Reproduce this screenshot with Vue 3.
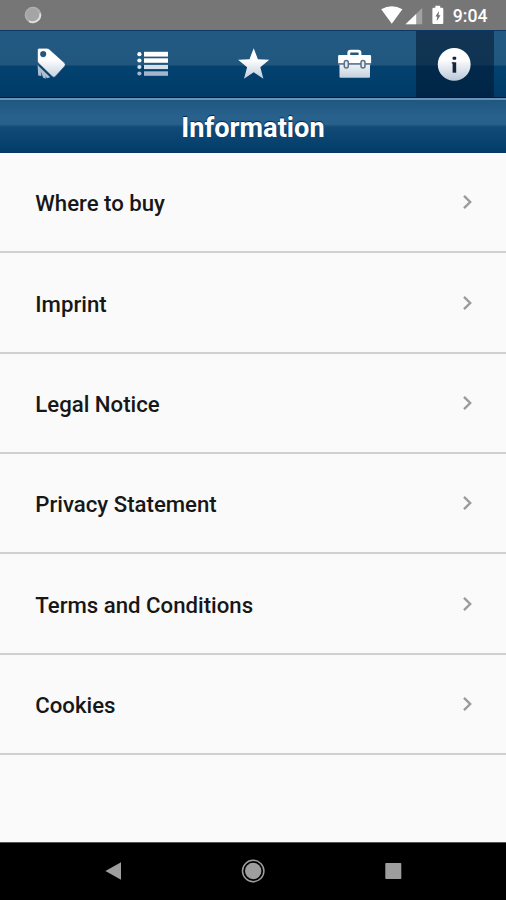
<script setup>
const tabs = ['tag', 'list', 'star', 'case', 'info']
const active = 'info'
const items = [
  'Where to buy',
  'Imprint',
  'Legal Notice',
  'Privacy Statement',
  'Terms and Conditions',
  'Cookies',
]
</script>

<template>
  <div class="screen">
    <header class="status">
      <svg class="spinner" width="20" height="20" viewBox="0 0 20 20">
        <circle cx="10" cy="10" r="8.3" fill="#b0b0b0" />
        <circle cx="9.6" cy="9.6" r="6.6" fill="#a5a5a5" />
        <path d="M17.2 8.5A7.6 7.6 0 0 1 6 16.2" fill="none" stroke="#dfdfdf" stroke-width="1.8" />
      </svg>
      <div class="indicators">
        <svg width="42" height="22" viewBox="0 0 42 22">
          <path d="M0.2 4.2Q10.8 -1.8 21.4 4.2L10.8 18.7Z" fill="#fff" />
          <path d="M41.2 3V19.3H24.5Z" fill="#a2a2a2" />
          <path d="M35.2 9V19.3H24.5Z" fill="#fff" />
        </svg>
        <svg class="battery" width="12" height="20" viewBox="0 0 12 20">
          <path d="M3.4 0.8H8.2V2.8H10.2Q11.3 2.8 11.3 3.9V17.9Q11.3 19 10.2 19H1.5Q0.4 19 0.4 17.9V3.9Q0.4 2.8 1.5 2.8H3.4Z" fill="#fff" />
          <path d="M7 6L3.4 11.6H5.3L4.6 16.2L8.5 10.3H6.6Z" fill="#717171" />
        </svg>
        <span class="time">9:04</span>
      </div>
    </header>

    <nav class="tabs">
      <div v-for="tab in tabs" :key="tab" class="tab" :class="{ active: tab === active }">
        <svg v-if="tab === 'tag'" class="icon" width="40" height="40" viewBox="0 0 40 40">
          <defs>
            <linearGradient id="shine" gradientUnits="userSpaceOnUse" x1="0" y1="4" x2="0" y2="36">
              <stop offset="0.35" stop-color="#fff" />
              <stop offset="1" stop-color="#bccada" />
            </linearGradient>
          </defs>
          <path d="M6.6 21L19.2 33.2L16 34.2L14.4 32.2L14.9 34.8L12.2 33.8L9.8 27.5L10.4 32L7.2 31.5Z" fill="#aebdd0" />
          <path fill-rule="evenodd" d="M8.2 4.3H15.6Q17.2 4.3 18.3 5.2L33.4 18.8Q35 20.4 33.8 22L24.5 32.3Q22.8 34 21 32.3L7.4 19.1Q6.5 18.2 6.5 17V6Q6.5 4.3 8.2 4.3ZM12.2 7.3A2.8 2.8 0 1 0 12.2 12.9A2.8 2.8 0 1 0 12.2 7.3Z" fill="url(#shine)" stroke="#12426d" stroke-width="0.5" />
        </svg>
        <svg v-else-if="tab === 'list'" class="icon" width="40" height="40" viewBox="0 0 40 40">
          <g fill="#fff">
            <path d="M12 7.8H36V12.6H12Z" /><circle cx="7.4" cy="10.2" r="2.1" />
            <path d="M12 14.3H36V18.8H12Z" /><circle cx="7.4" cy="16.5" r="2.1" />
          </g>
          <g fill="#d5e0eb">
            <path d="M12 20.9H36V25.1H12Z" /><circle cx="7.4" cy="23" r="2.1" />
          </g>
          <g fill="#a3b6cc">
            <path d="M12 27.3H36V31.8H12Z" /><circle cx="7.4" cy="29.5" r="2.1" />
          </g>
        </svg>
        <svg v-else-if="tab === 'star'" class="icon" width="40" height="40" viewBox="0 0 40 40">
          <path d="M20.7 4.2L24.9 15.2L36.3 15.8L27.3 23.2L30.4 34.8L20.7 28.3L11 34.8L14.1 23.2L5.1 15.8L16.5 15.2Z" fill="url(#shine)" />
        </svg>
        <svg v-else-if="tab === 'case'" class="icon" width="40" height="40" viewBox="0 0 40 40">
          <path d="M14.8 12V8.9Q14.8 7.2 16.5 7.2H24.3Q26 7.2 26 8.9V12" fill="none" stroke="#fff" stroke-width="2.8" />
          <path d="M5.2 11H36Q37.1 11 37.1 12V19.3H4.1V12Q4.1 11 5.2 11Z" fill="#fff" />
          <path d="M5.5 20.2H36V32.8Q36 33.8 35 33.8H6.5Q5.5 33.8 5.5 32.8Z" fill="url(#shine)" />
          <path d="M4.1 20H37.1" stroke="#6b8298" stroke-width="1.3" />
          <rect x="10.3" y="16.5" width="4" height="7.6" rx="2" fill="#e4eaf0" stroke="#597187" stroke-width="1.5" />
          <rect x="27" y="16.5" width="4" height="7.6" rx="2" fill="#e4eaf0" stroke="#597187" stroke-width="1.5" />
        </svg>
        <svg v-else class="icon" width="40" height="40" viewBox="0 0 40 40">
          <circle cx="19.2" cy="20.4" r="16.4" fill="url(#shine)" />
          <rect x="17.6" y="12.8" width="3.6" height="3" rx="0.8" fill="#14243d" />
          <rect x="17.6" y="18.3" width="3.6" height="10.4" fill="#14243d" />
          <rect x="16.8" y="18.3" width="2" height="1.2" fill="#14243d" />
        </svg>
      </div>
    </nav>

    <h1 class="title">Information</h1>

    <ul class="list">
      <li v-for="item in items" :key="item" class="row">
        <span>{{ item }}</span>
        <svg class="chevron" width="12" height="18" viewBox="0 0 12 18">
          <path d="M2 2.8L8.2 9L2 15.2" fill="none" stroke="#9b9b9b" stroke-width="2.4" />
        </svg>
      </li>
    </ul>

    <footer class="system">
      <svg width="20" height="20" viewBox="0 0 20 20">
        <path d="M18 1.3V18.7L2.4 10Z" fill="#9e9e9e" />
      </svg>
      <svg width="26" height="26" viewBox="0 0 26 26">
        <circle cx="13.2" cy="13" r="8.2" fill="#9e9e9e" />
        <circle cx="13.2" cy="13" r="10.7" fill="none" stroke="#9e9e9e" stroke-width="1.5" />
      </svg>
      <svg width="20" height="20" viewBox="0 0 20 20">
        <rect x="2.3" y="2" width="16" height="16" rx="0.8" fill="#9e9e9e" />
      </svg>
    </footer>
  </div>
</template>

<style>
body {
  margin: 0;
  background: #fafafa;
}
</style>

<style scoped>
.screen {
  display: flex;
  flex-direction: column;
  width: 506px;
  height: 900px;
  overflow: hidden;
  background: #fafafa;
  font-family: Roboto, "Liberation Sans", sans-serif;
}
.status {
  display: flex;
  justify-content: space-between;
  box-sizing: border-box;
  height: 30px;
  flex: none;
  padding: 5px 18.5px 0 22.5px;
  background: #767676;
}
.indicators {
  display: flex;
}
.battery {
  margin-left: 9px;
}
.time {
  margin-left: 9px;
  color: #fff;
  font-size: 17.6px;
  font-weight: 500;
  line-height: 22px;
}
.tabs {
  display: grid;
  grid-template-columns: repeat(5, 1fr);
  justify-items: center;
  box-sizing: border-box;
  height: 68px;
  flex: none;
  border-top: 1px solid #0a3865;
  border-bottom: 1px solid #00194a;
  background: linear-gradient(#235a83 0, #21577f 34px, #03426f 35px, #003a68 100%);
}
.tab {
  display: flex;
  align-items: center;
  justify-content: center;
  width: 78px;
}
.active {
  background: rgba(0, 15, 38, 0.5);
}
.icon {
  display: block;
  margin-top: -1px;
}
.title {
  box-sizing: border-box;
  height: 55px;
  flex: none;
  margin: 0;
  padding-top: 4px;
  border-top: 2px solid #6d92b7;
  border-bottom: 1px solid #083763;
  background: linear-gradient(#1e5880 0, #28618c 16px, #28618c 24px, #124b78 27px, #023c69 100%);
  color: #fff;
  font-size: 27.2px;
  font-weight: 700;
  line-height: 49px;
  text-align: center;
  text-shadow: 0 -1px 1px #002352;
}
.list {
  flex: 1;
  margin: 0;
  padding: 0;
  list-style: none;
}
.row {
  display: flex;
  align-items: center;
  justify-content: space-between;
  box-sizing: border-box;
  height: 100.35px;
  padding: 2.5px 32px 0 35.3px;
  border-bottom: 2px solid #d0d0d0;
  color: #171717;
  font-size: 22.2px;
  font-weight: 500;
}
.chevron {
  margin-top: -2px;
}
.system {
  display: flex;
  align-items: center;
  justify-content: space-between;
  box-sizing: border-box;
  height: 58px;
  flex: none;
  padding: 0 103px 2px;
  border-top: 1px solid #555;
  background: #000;
}
</style>
